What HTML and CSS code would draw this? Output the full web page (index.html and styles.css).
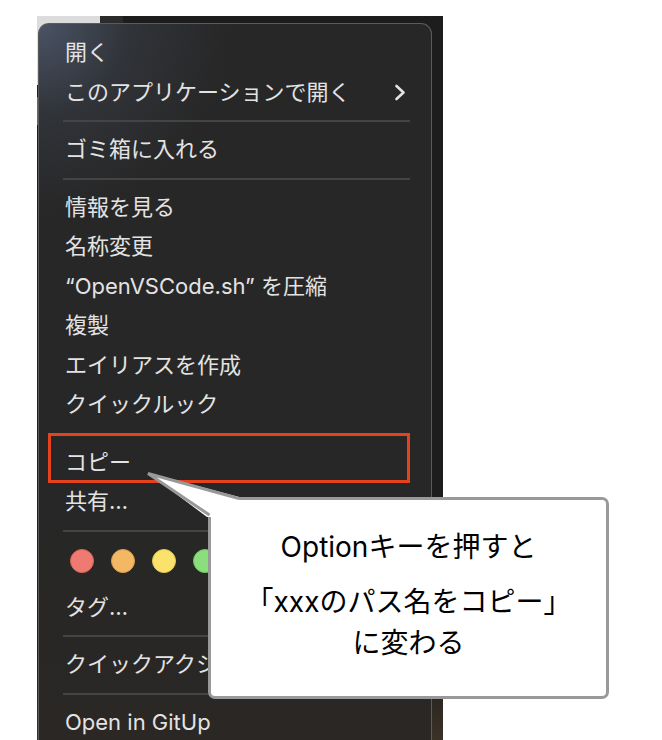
FILE: index.html
```html
<!DOCTYPE html>
<html lang="ja">
<head>
<meta charset="utf-8">
<link rel="stylesheet" href="styles.css">
</head>
<body>
<div class="shot">
  <div class="menu">
    <div class="item">開く</div>
    <div class="item sub"><span>このアプリケーションで開く</span><svg class="chev" width="12" height="17" viewBox="0 0 12 17"><path d="M2.5 2 L9.5 8.5 L2.5 15" fill="none" stroke="#e2e2e2" stroke-width="2.6" stroke-linecap="round" stroke-linejoin="round"/></svg></div>
    <div class="sep"></div>
    <div class="item">ゴミ箱に入れる</div>
    <div class="sep"></div>
    <div class="item">情報を見る</div>
    <div class="item">名称変更</div>
    <div class="item">“OpenVSCode.sh” を圧縮</div>
    <div class="item">複製</div>
    <div class="item">エイリアスを作成</div>
    <div class="item">クイックルック</div>
    <div class="sep"></div>
    <div class="item">コピー</div>
    <div class="item">共有…</div>
    <div class="sep"></div>
    <div class="tags">
      <span class="dot red"></span>
      <span class="dot orange"></span>
      <span class="dot yellow"></span>
      <span class="dot green"></span>
      <span class="dot blue"></span>
      <span class="dot purple"></span>
      <span class="dot gray"></span>
    </div>
    <div class="item">タグ…</div>
    <div class="sep"></div>
    <div class="item">クイックアクション</div>
    <div class="sep"></div>
    <div class="item">Open in GitUp</div>
    <div class="highlight"></div>
  </div>
</div>
<div class="callout">
  <p class="line l1">Optionキーを押すと</p>
  <p class="line l2">「xxxのパス名をコピー」</p>
  <p class="line l3">に変わる</p>
</div>
<svg class="tail" width="662" height="740" viewBox="0 0 662 740">
  <polygon points="148,473 239,497 239,517 207,517" fill="#ffffff"/>
  <polyline points="239,498.5 148,473.5 209.5,515" fill="none" stroke="#999999" stroke-width="3" stroke-linejoin="miter"/>
</svg>
</body>
</html>
```

FILE: styles.css
```css
html, body {
  margin: 0;
  padding: 0;
}
body {
  width: 662px;
  height: 740px;
  overflow: hidden;
  background: #ffffff;
  position: relative;
  font-family: Inter, "Noto Sans CJK JP", sans-serif;
}
.shot {
  margin: 16px 0 0 37px;
  width: 406px;
  height: 724px;
  box-sizing: border-box;
  padding: 7px 0 0 1px;
  overflow: hidden;
  background:
    linear-gradient(#dcdcdc, #dcdcdc) 0 0 / 63px 69px no-repeat,
    linear-gradient(#2d6fd8, #2d6fd8) 0 81px / 3px 28px no-repeat,
    linear-gradient(#2b2b2b, #2b2b2b) 63px 0 / 23px 8px no-repeat,
    linear-gradient(#dcdcdc, #dcdcdc) 0 0 / 100% 0 no-repeat,
    linear-gradient(to bottom, #1d1d1d 0, #1d1d1d 640px, #3a3226 724px);
}
.menu {
  position: relative;
  width: 394px;
  height: 760px;
  box-sizing: border-box;
  border: 1px solid #5b5b5b;
  border-bottom: none;
  border-radius: 11px 11px 0 0;
  padding-top: 9px;
  background:
    radial-gradient(circle at 0 0, rgba(78, 88, 108, 0.9) 0, rgba(60, 66, 78, 0.45) 90px, rgba(40, 40, 40, 0) 190px),
    linear-gradient(to bottom, #272727 0, #272727 500px, #2b2724 760px);
  color: #e3e3e3;
  font-size: 22px;
}
.item {
  height: 39.5px;
  line-height: 39.5px;
  padding-left: 26px;
  white-space: nowrap;
}
.sub {
  display: flex;
  align-items: center;
  justify-content: space-between;
  padding-right: 25px;
}
.chev {
  display: block;
}
.sep {
  height: 2px;
  background: #444444;
  margin: 8px 21px 8px 24px;
}
.tags {
  height: 48px;
  box-sizing: border-box;
  padding: 9px 0 0 31px;
  display: flex;
  gap: 17px;
}
.dot {
  width: 24px;
  height: 24px;
  border-radius: 50%;
  flex: none;
  box-sizing: border-box;
}
.red { background: #ef7a72; border: 1px solid #d9645c; }
.orange { background: #f3b863; border: 1px solid #dc9f4a; }
.yellow { background: #fbe36b; border: 1px solid #e0c856; }
.green { background: #8ade7c; border: 1px solid #70c463; }
.blue { background: #6fb2f5; }
.purple { background: #c58ae4; }
.gray { background: #a8a8a8; }
.highlight {
  position: absolute;
  left: 9px;
  top: 409px;
  width: 362px;
  height: 50px;
  box-sizing: border-box;
  border: 3px solid #e5421e;
}
.callout {
  position: absolute;
  left: 208px;
  top: 497px;
  width: 401px;
  height: 202px;
  box-sizing: border-box;
  border: 3px solid #999999;
  border-radius: 7px;
  background: #ffffff;
  color: #000000;
  font-size: 28px;
  text-align: center;
  padding-top: 27px;
}
.line {
  margin: 0;
  height: 40px;
  line-height: 40px;
  white-space: nowrap;
}
.l1 { margin-bottom: 15px; }
.l2 { margin-bottom: 1px; }
.tail {
  position: absolute;
  left: 0;
  top: 0;
  pointer-events: none;
}
```
